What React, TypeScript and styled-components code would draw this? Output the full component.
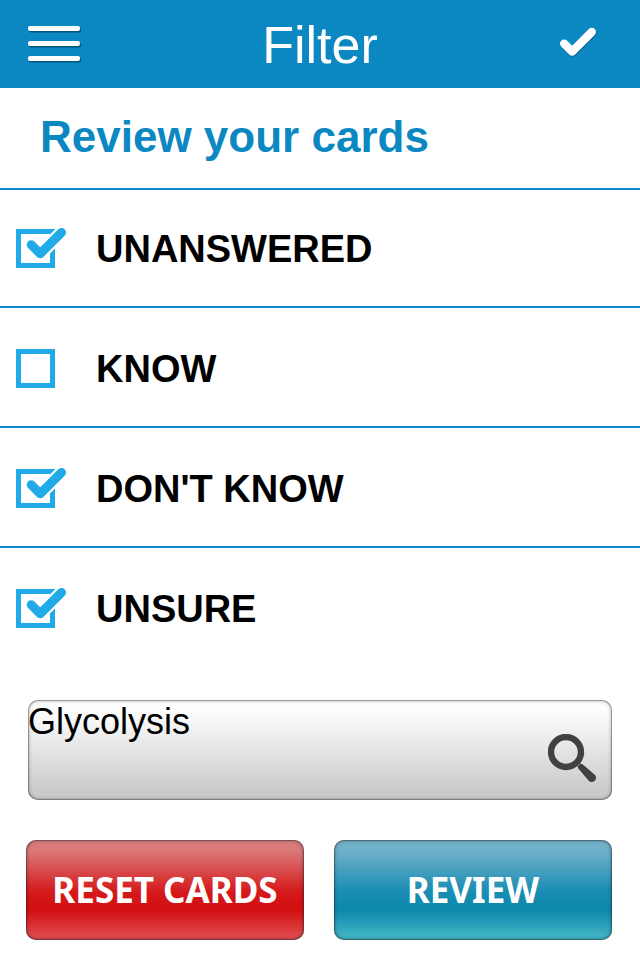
import React, { useState } from "react";
import styled, { createGlobalStyle } from "styled-components";

const GlobalStyle = createGlobalStyle`
  *, *::before, *::after { box-sizing: border-box; }
  body {
    margin: 0;
    background: #ffffff;
    font-family: "Liberation Sans", Arial, Helvetica, sans-serif;
  }
  button, input { font-family: inherit; }
`;

const Page = styled.div`
  display: flex;
  flex-direction: column;
  min-height: 100vh;
  background: #ffffff;
`;

const Header = styled.header`
  display: grid;
  grid-template-columns: 56px 1fr 40px;
  align-items: center;
  height: 88px;
  padding: 0 42px 0 26px;
  background: #0b88c1;
`;

const HeaderTitle = styled.h1`
  margin: 0;
  padding-top: 2px;
  color: #ffffff;
  font-size: 52px;
  font-weight: 400;
  line-height: 60px;
  text-align: center;
`;

const IconButton = styled.button`
  display: flex;
  padding: 0;
  border: 0;
  background: transparent;
  cursor: pointer;
`;

const SectionTitle = styled.h2`
  margin: 0;
  padding: 24px 40px 26px;
  border-bottom: 2px solid #0b88c1;
  color: #0b88c1;
  font-size: 44px;
  font-weight: 700;
  line-height: 50px;
`;

const OptionList = styled.ul`
  margin: 0;
  padding: 0;
  list-style: none;
`;

const OptionItem = styled.li`
  padding: 40px 16px 38px;
  border-bottom: 2px solid #0b88c1;

  &:first-child { padding-top: 38px; }
  &:last-child { border-bottom: 0; }
`;

const OptionLabel = styled.label`
  display: flex;
  gap: 30px;
  height: 40px;
  color: #000000;
  font-size: 38px;
  font-weight: 700;
  line-height: 42px;
  cursor: pointer;
`;

const TickBox = styled.span`
  display: grid;
  flex: none;
  width: 50px;
  height: 40px;

  > * { grid-area: 1 / 1; }
`;

const TickInput = styled.input`
  width: 40px;
  height: 40px;
  margin: 0;
  opacity: 0;
  cursor: pointer;
`;

const TickDrawing = styled.svg`
  pointer-events: none;
`;

const SearchField = styled.div`
  display: flex;
  align-items: flex-start;
  height: 100px;
  margin: 34px 28px 0;
  padding-right: 16px;
  border-radius: 10px;
  background: linear-gradient(#ffffff 0%, #fbfbfb 15%, #cbcbcb 90%, #cbcbcb 100%);
  box-shadow: inset 0 0 0 1px rgba(0, 0, 0, 0.25), inset 0 0 4px rgba(0, 0, 0, 0.45);
`;

const SearchInput = styled.input`
  flex: 1;
  min-width: 0;
  height: 44px;
  padding: 0;
  border: 0;
  outline: 0;
  background: transparent;
  color: #000000;
  font-size: 36px;
`;

const SearchButton = styled(IconButton)`
  margin-top: 34px;
`;

const Actions = styled.div`
  display: grid;
  grid-template-columns: 1fr 1fr;
  gap: 30px;
  padding: 40px 28px 20px 26px;
`;

const ActionButton = styled.button<{ $tone: "danger" | "primary" }>`
  height: 100px;
  padding: 0;
  border: 0;
  border-radius: 10px;
  background: ${(p) =>
    p.$tone === "danger"
      ? "linear-gradient(#dc7e7e 0%, #da7676 12%, #d5191b 52%, #d20f11 70%, #df474b 95%)"
      : "linear-gradient(#76b3ca 0%, #6cafc8 12%, #198db3 52%, #0c88ad 70%, #3fb2c3 95%)"};
  box-shadow: inset 0 0 0 1px rgba(40, 50, 60, 0.4), inset 0 0 4px rgba(0, 0, 0, 0.45);
  color: #ffffff;
  font-family: "Noto Sans", "Open Sans", sans-serif;
  font-size: 35px;
  font-weight: 700;
  line-height: 46px;
  white-space: nowrap;
  cursor: pointer;
`;

function MenuIcon() {
  return (
    <svg width="56" height="40" viewBox="0 0 56 40" aria-hidden="true">
      <g fill="#07496a" opacity="0.8">
        <rect x="3" y="3.5" width="52" height="5" rx="2" />
        <rect x="3" y="18.5" width="52" height="5" rx="2" />
        <rect x="3" y="33.5" width="52" height="5" rx="2" />
      </g>
      <g fill="#ffffff">
        <rect x="2" y="2" width="52" height="5" rx="2" />
        <rect x="2" y="17" width="52" height="5" rx="2" />
        <rect x="2" y="32" width="52" height="5" rx="2" />
      </g>
    </svg>
  );
}

function ConfirmIcon() {
  return (
    <svg width="40" height="40" viewBox="0 0 40 40" aria-hidden="true">
      <g fill="none" strokeWidth="8.4" strokeLinecap="round" strokeLinejoin="round">
        <path d="M7 20.6L15 28.6L34.6 9" stroke="#076797" />
        <path d="M6.2 19.6L14.2 27.6L33.8 8" stroke="#ffffff" />
      </g>
    </svg>
  );
}

function SearchIcon() {
  return (
    <svg width="48" height="48" viewBox="0 0 48 48" aria-hidden="true">
      <circle cx="18" cy="18" r="15" fill="none" stroke="#414141" strokeWidth="6.4" />
      <path
        d="M29.5 32.5L32.5 29.5Q34.5 30 36 31.5L46.5 40.5A4.2 4.2 0 0 1 41 47L32 36.5Q30 34.5 29.5 32.5Z"
        fill="#414141"
      />
    </svg>
  );
}

function TickMark({ checked }: { checked: boolean }) {
  return (
    <TickDrawing width="50" height="40" viewBox="0 0 50 40" aria-hidden="true">
      <rect x="2.5" y="3.5" width="34" height="34" fill="none" stroke="#21aae8" strokeWidth="5" />
      {checked && (
        <g fill="none" strokeLinecap="round" strokeLinejoin="round">
          <path d="M15.2 16.7L24.2 25.7L45.5 4.5" stroke="#ffffff" strokeWidth="13.5" />
          <path d="M15.2 16.7L24.2 25.7L45.5 4.5" stroke="#21aae8" strokeWidth="9" />
        </g>
      )}
    </TickDrawing>
  );
}

const initialOptions = [
  { label: "UNANSWERED", checked: true },
  { label: "KNOW", checked: false },
  { label: "DON'T KNOW", checked: true },
  { label: "UNSURE", checked: true },
];

export default function App() {
  const [options, setOptions] = useState(initialOptions);
  const [topic, setTopic] = useState("Glycolysis");

  const toggle = (label: string) =>
    setOptions((all) => all.map((o) => (o.label === label ? { ...o, checked: !o.checked } : o)));

  return (
    <Page>
      <GlobalStyle />
      <Header>
        <IconButton type="button" aria-label="Menu">
          <MenuIcon />
        </IconButton>
        <HeaderTitle>Filter</HeaderTitle>
        <IconButton type="button" aria-label="Apply">
          <ConfirmIcon />
        </IconButton>
      </Header>
      <main>
        <SectionTitle>Review your cards</SectionTitle>
        <OptionList>
          {options.map((option) => (
            <OptionItem key={option.label}>
              <OptionLabel>
                <TickBox>
                  <TickInput
                    type="checkbox"
                    checked={option.checked}
                    onChange={() => toggle(option.label)}
                  />
                  <TickMark checked={option.checked} />
                </TickBox>
                {option.label}
              </OptionLabel>
            </OptionItem>
          ))}
        </OptionList>
        <SearchField>
          <SearchInput
            type="text"
            aria-label="Topic"
            value={topic}
            onChange={(e) => setTopic(e.target.value)}
          />
          <SearchButton type="button" aria-label="Search">
            <SearchIcon />
          </SearchButton>
        </SearchField>
        <Actions>
          <ActionButton type="button" $tone="danger">RESET CARDS</ActionButton>
          <ActionButton type="button" $tone="primary">REVIEW</ActionButton>
        </Actions>
      </main>
    </Page>
  );
}
